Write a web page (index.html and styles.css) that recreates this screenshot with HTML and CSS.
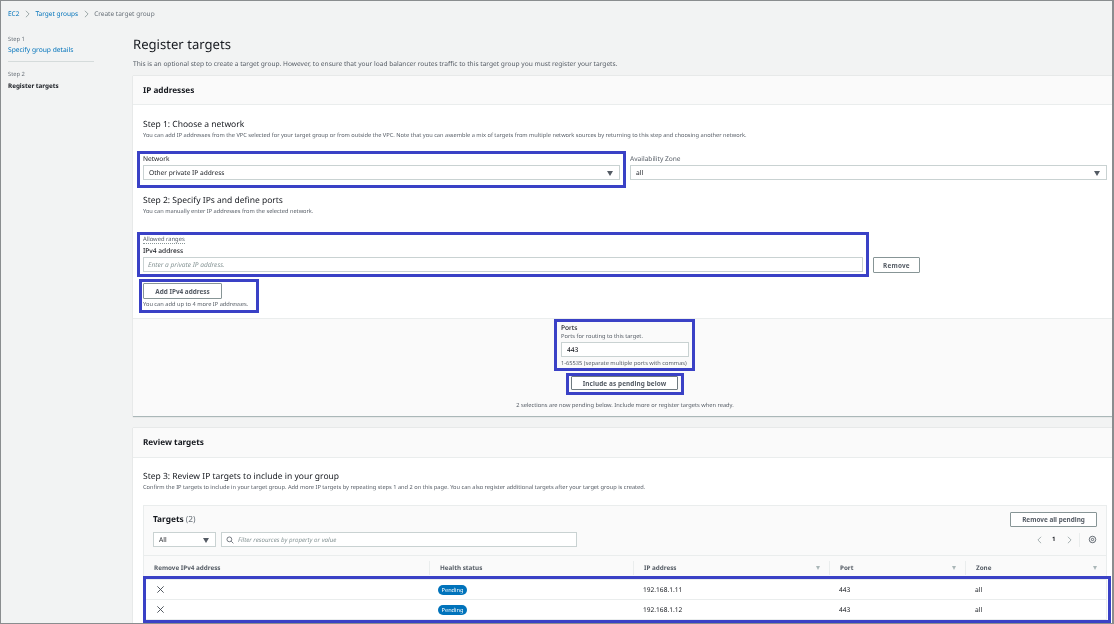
FILE: index.html
```html
<!DOCTYPE html>
<html lang="en">
<head>
<meta charset="utf-8">
<title>Create target group</title>
<link rel="stylesheet" href="styles.css">
</head>
<body>
<div class="frame">
  <nav class="crumbs">
    <a>EC2</a>
    <svg class="crumb-sep" viewBox="0 0 6 10"><path d="M1 1l4 4-4 4"/></svg>
    <a>Target groups</a>
    <svg class="crumb-sep" viewBox="0 0 6 10"><path d="M1 1l4 4-4 4"/></svg>
    <span>Create target group</span>
  </nav>
  <div class="shell">
    <aside class="steps">
      <div class="step-no">Step 1</div>
      <a class="step-link">Specify group details</a>
      <hr class="step-rule">
      <div class="step-no">Step 2</div>
      <div class="step-current">Register targets</div>
    </aside>
    <main class="content">
      <h1 class="page-title">Register targets</h1>
      <p class="page-desc">This is an optional step to create a target group. However, to ensure that your load balancer routes traffic to this target group you must register your targets.</p>

      <section class="card card-ip">
        <header class="card-head"><h2>IP addresses</h2></header>
        <div class="card-body">
          <h3 class="sub-title">Step 1: Choose a network</h3>
          <p class="sub-desc">You can add IP addresses from the VPC selected for your target group or from outside the VPC. Note that you can assemble a mix of targets from multiple network sources by returning to this step and choosing another network.</p>
          <div class="network-row">
            <div class="field">
              <div class="label">Network</div>
              <div class="select"><span>Other private IP address</span><i class="caret"></i></div>
            </div>
            <div class="field">
              <div class="label label-light">Availability Zone</div>
              <div class="select"><span>all</span><i class="caret"></i></div>
            </div>
          </div>
          <h3 class="sub-title title-step2">Step 2: Specify IPs and define ports</h3>
          <p class="sub-desc">You can manually enter IP addresses from the selected network.</p>
          <div class="ranges"><span>Allowed ranges</span></div>
          <div class="label label-ipv4">IPv4 address</div>
          <div class="ipv4-row">
            <div class="input placeholder">Enter a private IP address.</div>
            <button class="btn btn-remove">Remove</button>
          </div>
          <button class="btn btn-add">Add IPv4 address</button>
          <p class="hint hint-add">You can add up to 4 more IP addresses.</p>
        </div>
        <div class="card-foot">
          <div class="ports">
            <div class="label">Ports</div>
            <div class="hint hint-ports">Ports for routing to this target.</div>
            <div class="input input-port">443</div>
            <div class="hint hint-range">1-65535 (separate multiple ports with commas)</div>
          </div>
          <button class="btn btn-include">Include as pending below</button>
          <p class="hint hint-pending">2 selections are now pending below. Include more or register targets when ready.</p>
        </div>
      </section>

      <section class="card card-review">
        <header class="card-head"><h2>Review targets</h2></header>
        <div class="card-body">
          <h3 class="sub-title">Step 3: Review IP targets to include in your group</h3>
          <p class="sub-desc">Confirm the IP targets to include in your target group. Add more IP targets by repeating steps 1 and 2 on this page. You can also register additional targets after your target group is created.</p>
          <div class="table-card">
            <div class="tools">
              <div class="tools-top">
                <div class="targets-title">Targets <span>(2)</span></div>
                <button class="btn btn-remove-all">Remove all pending</button>
              </div>
              <div class="tools-bottom">
                <div class="select select-all"><span>All</span><i class="caret"></i></div>
                <div class="filter">
                  <svg class="search" viewBox="0 0 10 10"><circle cx="4.2" cy="4.2" r="3"/><path d="M6.5 6.5L9.2 9.2"/></svg>
                  <span>Filter resources by property or value</span>
                </div>
                <div class="pager">
                  <svg class="pg" viewBox="0 0 6 10"><path d="M5 1L1 5l4 4"/></svg>
                  <b>1</b>
                  <svg class="pg" viewBox="0 0 6 10"><path d="M1 1l4 4-4 4"/></svg>
                  <i class="pager-sep"></i>
                  <svg class="gear" viewBox="0 0 10 10"><circle cx="5" cy="5" r="3.6"/><circle cx="5" cy="5" r="1.3"/></svg>
                </div>
              </div>
            </div>
            <div class="grid grid-head">
              <div class="cell">Remove IPv4 address</div>
              <div class="cell">Health status</div>
              <div class="cell">IP address<i class="sort"></i></div>
              <div class="cell">Port<i class="sort"></i></div>
              <div class="cell">Zone<i class="sort"></i></div>
            </div>
            <div class="grid grid-row">
              <div class="cell"><svg class="x" viewBox="0 0 10 10"><path d="M1.5 1.5l7 7M8.500 1.500l-7 7"/></svg></div>
              <div class="cell"><span class="badge">Pending</span></div>
              <div class="cell">192.168.1.11</div>
              <div class="cell">443</div>
              <div class="cell">all</div>
            </div>
            <div class="grid grid-row">
              <div class="cell"><svg class="x" viewBox="0 0 10 10"><path d="M1.5 1.500l7 7M8.500 1.500l-7 7"/></svg></div>
              <div class="cell"><span class="badge">Pending</span></div>
              <div class="cell">192.168.1.12</div>
              <div class="cell">443</div>
              <div class="cell">all</div>
            </div>
          </div>
        </div>
      </section>
    </main>
  </div>

  <div class="mark mark-network"></div>
  <div class="mark mark-ipv4"></div>
  <div class="mark mark-add"></div>
  <div class="mark mark-ports"></div>
  <div class="mark mark-include"></div>
  <div class="mark mark-rows"></div>
</div>
</body>
</html>
```
FILE: styles.css
```css
* { box-sizing: border-box; }
html, body { margin: 0; padding: 0; height: 624px; overflow: hidden; background: #fff; }
body { font-family: "Noto Sans", "Open Sans", sans-serif; color: #16191f; font-size: 6.5px; line-height: 9px; text-rendering: geometricPrecision; }
h1, h2, h3, p { margin: 0; font-weight: 400; }
button { font-family: inherit; margin: 0; cursor: pointer; }

.frame { position: relative; width: 1114px; height: 624px; background: #f2f3f3; border: 1px solid #8a8d8f; border-right-width: 2px; overflow: hidden; filter: blur(.3px); }

.crumbs { display: flex; align-items: center; gap: 5.500px; height: 9px; margin: 8px 0 0 7px; font-size: 6.500px; color: #687078; }
.crumbs a { color: #0073bb; }
.crumb-sep { width: 5px; height: 8px; fill: none; stroke: #879596; stroke-width: 1; }

.shell { display: flex; margin-top: 17px; }
.steps { width: 132px; flex: none; padding: 0 0 0 7px; }
.step-no { font-size: 5.800px; line-height: 8px; color: #687078; }
.step-link { display: block; margin-top: 2px; color: #0073bb; font-size: 6.700px; line-height: 10px; }
.step-rule { width: 86px; height: 1px; border: 0; margin: 6px 0 8px; background: #d5dbdb; }
.step-current { margin-top: 3px; font-size: 6.300px; line-height: 10px; font-weight: 700; }

.content { flex: 1; min-width: 0; }
.page-title { font-size: 13.100px; line-height: 18px; }
.page-desc { margin-top: 6px; font-size: 6.600px; line-height: 9px; color: #545b64; }

.card { background: #fff; margin-top: 8px; border-bottom: 1px solid #aab7b8; box-shadow: 0 0 1px rgba(0,28,36,.25); }
.card-review { margin-top: 11px; }
.card-head { height: 29px; background: #fafafa; border-bottom: 1px solid #eaeded; padding: 8.500px 10px 0; }
.card-head h2 { font-size: 8.200px; line-height: 11px; font-weight: 700; color: #16191f; }
.card-review .card-head { height: 30px; }
.card-body { padding: 14px 5px 0 10px; }
.card-ip .card-body { height: 214px; border-bottom: 1px solid #eaeded; }

.sub-title { font-size: 8.500px; line-height: 12px; }
.sub-desc { font-size: 5.670px; line-height: 9px; color: #545b64; white-space: nowrap; }
.title-step2 { margin-top: 15px; }

.network-row { display: grid; grid-template-columns: 477px 477px; gap: 10px; margin-top: 14px; }
.label { font-size: 6.600px; line-height: 9px; }
.label-light { color: #545b64; }
.select { position: relative; display: flex; align-items: center; height: 15px; margin-top: 2px; padding: 0 5px; background: #fff; border: 1px solid #c9d2d2; font-size: 6.600px; }
.caret { position: absolute; right: 6px; top: 4.500px; border: 3px solid transparent; border-top: 5px solid #545b64; border-bottom: 0; }

.ranges { margin-top: 20px; height: 10px; font-size: 5.800px; line-height: 7px; color: #545b64; }
.ranges span { display: inline-block; border-bottom: 1px dotted #879596; }
.label-ipv4 { margin-top: 0; font-weight: 500; }
.ipv4-row { display: flex; align-items: flex-start; gap: 10px; margin-top: 2px; }
.input { height: 15px; border: 1px solid #c9d2d2; background: #fff; padding: 0 4px; font-size: 6.600px; line-height: 13px; }
.placeholder { width: 720px; font-style: italic; color: #879596; }
.btn { background: #fff; border: 1px solid #879596; border-radius: 1px; color: #545b64; font-weight: 700; font-size: 6.400px; line-height: 9px; padding: 0; }
.btn-remove { width: 47px; height: 16px; letter-spacing: .2px; }
.btn-add { display: block; width: 79px; height: 16px; margin-top: 10px; }
.hint { font-size: 5.700px; line-height: 8px; color: #545b64; }
.hint-add { margin-top: 1px; }

.card-foot { display: flex; flex-direction: column; align-items: center; height: 97px; background: #fafafa; position: relative; }
.ports { width: 128px; margin-top: 4px; margin-left: 5px; }
.ports .label { font-weight: 500; }
.hint-ports { line-height: 8px; }
.input-port { margin-top: 2px; padding-left: 5px; color: #16191f; font-weight: 500; }
.hint-range { margin-top: 2px; white-space: nowrap; }
.btn-include { width: 107px; height: 14px; margin-top: 9px; margin-left: 4px; letter-spacing: .1px; border-width: 1.500px; border-color: #6f7a80; }
.hint-pending { margin-top: 11px; margin-left: 5px; white-space: nowrap; }

.card-review .card-body { padding-top: 13px; }
.table-card { margin-top: 13px; border: 1px solid #eaeded; background: #fff; height: 150px; }
.tools { height: 50px; background: #fafafa; border-bottom: 1px solid #eaeded; padding: 6px 9px 0 9px; }
.tools-top { display: flex; justify-content: space-between; align-items: center; height: 15px; }
.targets-title { font-size: 8.300px; font-weight: 700; }
.targets-title span { font-weight: 400; color: #687078; }
.btn-remove-all { width: 87px; height: 15px; }
.tools-bottom { display: flex; align-items: center; gap: 5px; margin-top: 5px; }
.select-all { width: 63px; margin-top: 0; background: #fff; }
.select-all .caret { right: 6px; }
.filter { display: flex; align-items: center; gap: 4px; width: 356px; height: 15px; background: #fff; border: 1px solid #c9d2d2; padding: 0 4px; font-style: italic; color: #879596; font-size: 6.200px; }
.search { width: 8px; height: 8px; fill: none; stroke: #545b64; stroke-width: 1; }
.pager { display: flex; align-items: center; margin-left: auto; color: #16191f; font-size: 6px; }
.pager b { margin: 0 11px 0 10px; }
.pg { width: 5px; height: 8px; fill: none; stroke: #879596; stroke-width: .9; }
.pager-sep { width: 1px; height: 14px; background: #eaeded; margin: 0 8px 0 7.500px; }
.gear { width: 9px; height: 9px; fill: none; stroke: #545b64; stroke-width: 1; }

.grid { display: grid; grid-template-columns: 285px 204px 196px 136px 1fr; }
.grid-head { height: 24px; background: #fafafa; border-bottom: 1px solid #eaeded; align-items: center; color: #545b64; font-weight: 700; font-size: 6.300px; }
.grid-head .cell { position: relative; height: 14px; padding-left: 10px; line-height: 14px; border-left: 1px solid #eaeded; }
.grid-head .cell:first-child { border-left: 0; }
.sort { position: absolute; right: 9px; top: 5px; border: 2.500px solid transparent; border-top: 4px solid #aab7b8; border-bottom: 0; }
.grid-row { height: 20px; align-items: center; border-bottom: 1px solid #eaeded; font-size: 6.600px; }
.grid-row .cell { padding-left: 10px; }
.grid-row .cell:first-child { padding-left: 12px; }
.grid-row .cell:nth-child(2) { padding-left: 9px; }
.x { display: block; width: 9px; height: 9px; fill: none; stroke: #414750; stroke-width: 1; }
.badge { display: inline-block; width: 29px; height: 10px; border-radius: 5px; background: #0073bb; color: #fff; text-align: center; font-size: 5.600px; line-height: 10px; }

.mark { position: absolute; border: 3px solid #3a41c6; pointer-events: none; }
.mark-network { left: 136px; top: 150px; width: 489px; height: 37px; }
.mark-ipv4 { left: 136px; top: 231px; width: 732px; height: 45px; }
.mark-add { left: 138px; top: 278px; width: 120px; height: 34px; }
.mark-ports { left: 553px; top: 318px; width: 141px; height: 52px; }
.mark-include { left: 565px; top: 372px; width: 118px; height: 22px; }
.mark-rows { left: 142px; top: 575px; width: 968px; height: 47px; }
```
